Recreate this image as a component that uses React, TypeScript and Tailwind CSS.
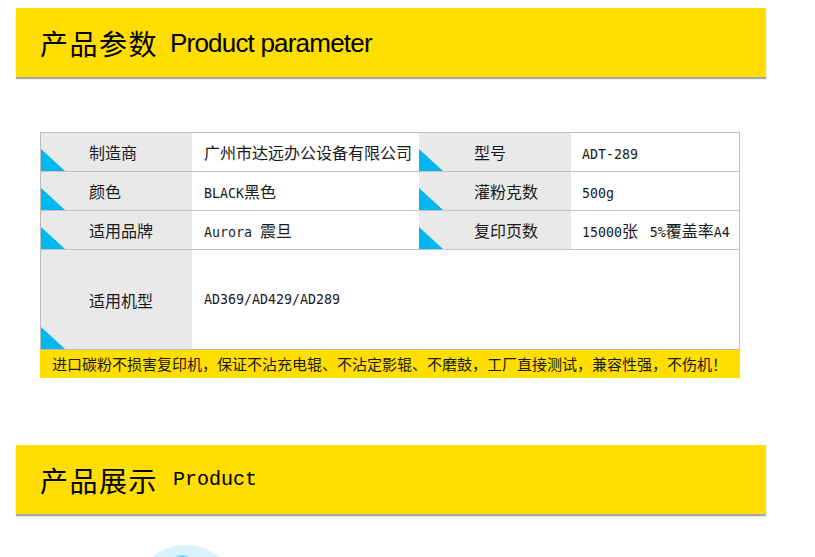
import React from 'react';

const cjk = "font-['Noto_Sans_CJK_SC',sans-serif]";

function Corner() {
    return (
        <svg className="absolute left-0 bottom-0" width="24" height="22" viewBox="0 0 24 22">
            <polygon points="0,0 0,22 24,22" fill="#00b8ef" />
        </svg>
    );
}

function Mono({ children }: { children: React.ReactNode }) {
    return <span className="font-['DejaVu_Sans_Mono',monospace] text-[13.3px]">{children}</span>;
}

export default function App() {
    const rows = [
        { a: '制造商', av: <>广州市达远办公设备有限公司</>, b: '型号', bv: <Mono>ADT-289</Mono> },
        { a: '颜色', av: <><Mono>BLACK</Mono>黑色</>, b: '灌粉克数', bv: <Mono>500g</Mono> },
        { a: '适用品牌', av: <><Mono>Aurora </Mono>震旦</>, b: '复印页数', bv: <><Mono>15000</Mono>张 <Mono> 5%</Mono>覆盖率<Mono>A4</Mono></> },
    ];

    return (
        <div className={`bg-white min-h-[557px] pt-[8px] text-[#1a1a1a] ${cjk}`}>
            {/* banner 1 */}
            <div className="ml-[16px] w-[750px] h-[69px] bg-[#ffde00] shadow-[0_2px_1px_rgba(0,0,0,0.35)] flex items-center pl-[24px]">
                <span className="text-[28px] tracking-[1.5px] text-black leading-none">产品参数</span>
                <span className="ml-[12px] font-['Liberation_Sans',sans-serif] text-[26px] tracking-[-0.8px] text-black leading-none">
                    Product parameter
                </span>
            </div>

            {/* table */}
            <div className="ml-[40px] mt-[55px] w-[700px] border border-[#bdbdbd] text-[16px]">
                {rows.map((r, i) => (
                    <div key={i} className="flex h-[39px] border-b border-[#c4c4c4]">
                        <div className="relative w-[151px] bg-[#e9e9e9] flex items-center pl-[48px]">
                            <Corner />
                            <span>{r.a}</span>
                        </div>
                        <div className="w-[227px] bg-white flex items-center pl-[12px] whitespace-pre">
                            <span>{r.av}</span>
                        </div>
                        <div className="relative w-[152px] bg-[#e9e9e9] flex items-center pl-[55px]">
                            <Corner />
                            <span>{r.b}</span>
                        </div>
                        <div className="flex-1 bg-white flex items-center pl-[11px] whitespace-pre">
                            <span>{r.bv}</span>
                        </div>
                    </div>
                ))}
                <div className="flex h-[99px]">
                    <div className="relative w-[151px] bg-[#e9e9e9] flex items-center pl-[48px]">
                        <Corner />
                        <span>适用机型</span>
                    </div>
                    <div className="flex-1 bg-white flex items-center pl-[12px]">
                        <Mono>AD369/AD429/AD289</Mono>
                    </div>
                </div>
            </div>
            <div className="ml-[40px] w-[700px] h-[28px] bg-[#ffde00] flex items-center pl-[12px] text-[15px] text-[#1a1a1a] whitespace-nowrap">
                进口碳粉不损害复印机，保证不沾充电辊、不沾定影辊、不磨鼓，工厂直接测试，兼容性强，不伤机！
            </div>

            {/* banner 2 */}
            <div className="ml-[16px] mt-[67px] w-[750px] h-[69px] bg-[#ffde00] shadow-[0_2px_1px_rgba(0,0,0,0.35)] flex items-center pl-[24px]">
                <span className="text-[28px] tracking-[1.5px] text-black leading-none">产品展示</span>
                <span className="ml-[15px] font-['Liberation_Mono',monospace] text-[20px] text-black leading-none">
                    Product
                </span>
            </div>

            {/* product image peek */}
            <div className="ml-[132px] mt-[31px] h-[13px] overflow-hidden">
                <svg width="108" height="108" viewBox="0 0 108 108">
                    <circle cx="54" cy="54" r="54" fill="#d9f2fc" />
                    <ellipse cx="50" cy="16" rx="9" ry="6" fill="#7fd3f5" />
                </svg>
            </div>
        </div>
    );
}
